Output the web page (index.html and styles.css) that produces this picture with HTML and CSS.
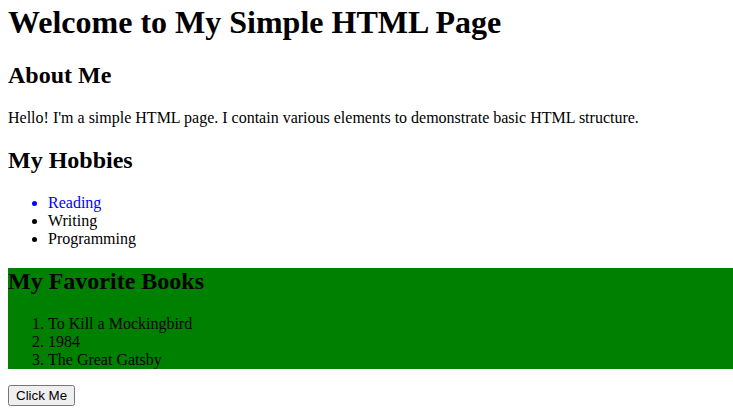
FILE: index.html
```html
<!DOCTYPE html>
<html>
<head>
<meta charset="utf-8">
<title>My Simple HTML Page</title>
<link rel="stylesheet" href="styles.css">
</head>
<body class="page">
<h1 class="title">Welcome to My Simple HTML Page</h1>
<h2 class="section-title">About Me</h2>
<p class="intro">Hello! I'm a simple HTML page. I contain various elements to demonstrate basic HTML structure.</p>
<h2 class="section-title">My Hobbies</h2>
<ul class="hobbies">
<li class="hobby highlight">Reading</li>
<li class="hobby">Writing</li>
<li class="hobby">Programming</li>
</ul>
<div class="books">
<h2 class="section-title">My Favorite Books</h2>
<ol class="book-list">
<li>To Kill a Mockingbird</li>
<li>1984</li>
<li>The Great Gatsby</li>
</ol>
</div>
<button class="btn" type="button">Click Me</button>
</body>
</html>
```
FILE: styles.css
```css
html {
  overflow: hidden;
}
.page {
  margin: 4px 0 8px 8px;
  font-family: "Liberation Serif", "Times New Roman", serif;
  font-size: 16px;
  color: #000;
  background: #fff;
}
.title {
  font-size: 32px;
  margin: 0 0 21px;
}
.section-title {
  font-size: 24px;
  margin: 20px 0;
}
.hobby.highlight {
  color: blue;
}
.books {
  background: green;
}
.btn {
  font-family: "Liberation Sans", Arial, sans-serif;
  font-size: 13.333px;
}
```
